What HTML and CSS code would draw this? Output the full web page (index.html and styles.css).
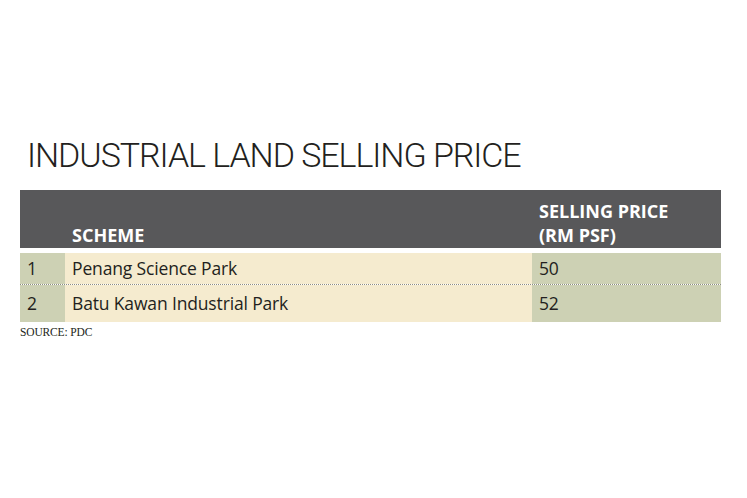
FILE: index.html
```html
<!DOCTYPE html>
<html>
<head>
<meta charset="utf-8">
<link rel="stylesheet" href="styles.css">
</head>
<body>
<div class="page">
  <h1 class="title">INDUSTRIAL LAND SELLING PRICE</h1>
  <div class="table">
    <div class="head">
      <div class="hc num"></div>
      <div class="hc scheme">SCHEME</div>
      <div class="hc price">SELLING PRICE<br>(RM PSF)</div>
    </div>
    <div class="row">
      <div class="c num">1</div>
      <div class="c scheme">Penang Science Park</div>
      <div class="c price">50</div>
    </div>
    <div class="row last">
      <div class="c num">2</div>
      <div class="c scheme">Batu Kawan Industrial Park</div>
      <div class="c price">52</div>
    </div>
  </div>
  <div class="source">SOURCE: PDC</div>
</div>
</body>
</html>
```
FILE: styles.css
```css
html, body {
  margin: 0;
  padding: 0;
  background: #ffffff;
}
.page {
  padding: 130px 26px 0 20px;
  font-family: "Open Sans", "Noto Sans", sans-serif;
  color: #231f20;
}
.title {
  margin: 0 0 10px 7px;
  font-family: "Roboto", "Open Sans", sans-serif;
  font-weight: 300;
  font-size: 34px;
  line-height: 50px;
  letter-spacing: -1.05px;
  color: #231f20;
}
.table {
  width: 701px;
}
.head {
  display: grid;
  grid-template-columns: 45px 467px 189px;
  background: #58585a;
  height: 58px;
  margin-bottom: 5px;
}
.hc {
  color: #ffffff;
  font-weight: 700;
  font-size: 18px;
  line-height: 24px;
  align-self: end;
  padding: 0 0 1px 7px;
  letter-spacing: 0;
}
.row {
  display: grid;
  grid-template-columns: 45px 467px 189px;
  height: 31px;
  border-bottom: 1px dotted #8d8d86;
}
.row.last {
  border-bottom: none;
  height: 37px;
}
.c {
  font-size: 17.5px;
  line-height: 31px;
  padding-left: 7px;
  letter-spacing: -0.15px;
}
.row.last .c {
  line-height: 37px;
}
.c.num {
  background: #cdd1b4;
}
.c.scheme {
  background: #f5ebcf;
}
.c.price {
  background: #cdd1b4;
}
.source {
  margin-top: 4px;
  font-family: "Liberation Serif", serif;
  font-size: 11.5px;
  line-height: 13px;
  letter-spacing: -0.15px;
}
```
